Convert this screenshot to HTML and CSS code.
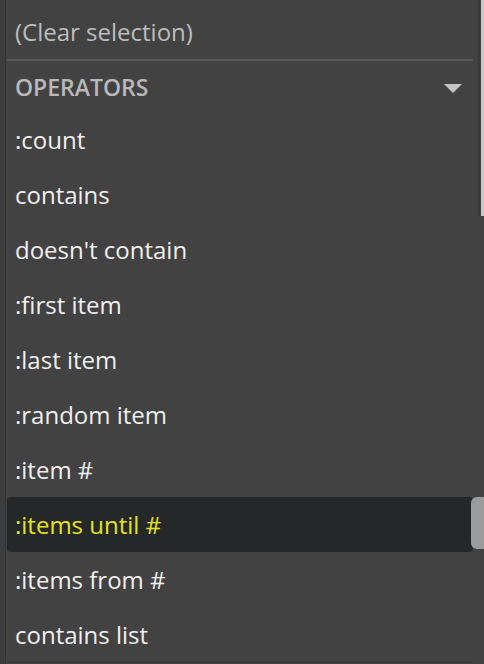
FILE: index.html
```html
<!DOCTYPE html>
<html lang="en">
<head>
  <meta charset="UTF-8">
  <meta name="viewport" content="width=device-width, initial-scale=1.0">
  <title>Operators</title>
  <link rel="stylesheet" href="styles.css">
</head>
<body>
  <div id="page">
    <div class="gutter"></div>
    <div id="menu">
      <div class="clear">(Clear selection)</div>
      <div class="group">
        <span>OPERATORS</span>
        <svg class="caret" width="18" height="11" viewBox="0 0 18 11"><polygon points="0,1 18,1 9,10" fill="#c4c4c4"/></svg>
      </div>
      <ul class="items">
        <li>:count</li>
        <li>contains</li>
        <li>doesn't contain</li>
        <li>:first item</li>
        <li>:last item</li>
        <li>:random item</li>
        <li>:item #</li>
        <li class="active">:items until #</li>
        <li>:items from #</li>
        <li class="last">contains list</li>
      </ul>
    </div>
    <div class="track">
      <div class="strip"></div>
      <div class="thumb"></div>
    </div>
  </div>
</body>
</html>
```

FILE: styles.css
```css
html, body {
  margin: 0;
  padding: 0;
  height: 100%;
  overflow: hidden;
}
body {
  background: #3a3a3a;
  font-family: 'Open Sans', 'Noto Sans', sans-serif;
  font-size: 24px;
  color: #f0f0f0;
}
#page {
  display: flex;
  height: 664px;
}
.gutter {
  width: 5px;
  border-right: 1px solid #333;
  background: #3d3d3d;
}
#menu {
  flex: 1;
  background: #424242;
  padding-left: 1px;
}
.clear {
  height: 61px;
  box-sizing: border-box;
  padding: 5px 0 0 8px;
  line-height: 53px;
  color: #bdbdbd;
  border-bottom: 2px solid #595959;
  margin-right: -2px;
}
.group {
  height: 52px;
  display: flex;
  align-items: center;
  justify-content: space-between;
  padding: 0 11px 0 8px;
  box-sizing: border-box;
  font-weight: 600;
  font-size: 23px;
  color: #b9b9b9;
}
.caret {
  margin-top: 2px;
}
.items {
  list-style: none;
  margin: 0;
  padding: 0;
}
.items li {
  height: 55px;
  line-height: 54px;
  padding-left: 8px;
  border-radius: 4px;
}
.items li.active {
  background: #262729;
  color: #e4e41c;
  height: 55px;
  line-height: 55px;
  margin-top: -1px;
  margin-bottom: 1px;
}
.items li.last {
  border-bottom: 2px solid #3a3a3a;
  height: 53px;
}
.track {
  width: 11px;
  background: #424242;
  position: relative;
}
.strip {
  height: 216px;
  margin-left: 5px;
  border-left: 2px solid #393939;
  background: linear-gradient(to right, #424242 0 1px, #c8c8c8 1px);
}
.thumb {
  position: absolute;
  top: 497px;
  left: -2px;
  right: 0;
  height: 52px;
  background: #9c9c9c;
  border-radius: 6px 0 0 6px;
}
```
